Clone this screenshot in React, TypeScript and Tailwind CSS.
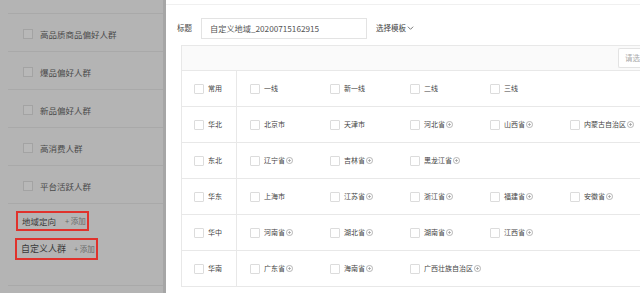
import React from 'react';

const font = { fontFamily: '"Noto Sans CJK SC", "Liberation Sans", sans-serif' };

const crowds = ['高品质商品偏好人群', '爆品偏好人群', '新品偏好人群', '高消费人群', '平台活跃人群'];

type Item = { name: string; more?: boolean };

const regions: { label: string; items: Item[] }[] = [
  { label: '常用', items: [{ name: '一线' }, { name: '新一线' }, { name: '二线' }, { name: '三线' }] },
  {
    label: '华北',
    items: [
      { name: '北京市' },
      { name: '天津市' },
      { name: '河北省', more: true },
      { name: '山西省', more: true },
      { name: '内蒙古自治区', more: true },
    ],
  },
  { label: '东北', items: [{ name: '辽宁省', more: true }, { name: '吉林省', more: true }, { name: '黑龙江省', more: true }] },
  {
    label: '华东',
    items: [
      { name: '上海市' },
      { name: '江苏省', more: true },
      { name: '浙江省', more: true },
      { name: '福建省', more: true },
      { name: '安徽省', more: true },
    ],
  },
  {
    label: '华中',
    items: [{ name: '河南省', more: true }, { name: '湖北省', more: true }, { name: '湖南省', more: true }, { name: '江西省', more: true }],
  },
  { label: '华南', items: [{ name: '广东省', more: true }, { name: '海南省', more: true }, { name: '广西壮族自治区', more: true }] },
];

function Box() {
  return <span className="w-[10px] h-[10px] border border-[#dcdcdc] bg-white rounded-[1px] shrink-0" />;
}

function PlusCircle() {
  return (
    <svg width="7" height="7" viewBox="0 0 8 8" className="ml-[1px] shrink-0">
      <circle cx="4" cy="4" r="3.5" fill="none" stroke="#999" strokeWidth="0.8" />
      <path d="M4 2.2v3.6M2.2 4h3.6" stroke="#999" strokeWidth="0.8" />
    </svg>
  );
}

export default function App() {
  return (
    <div className="w-[640px] h-[293px] flex overflow-hidden bg-white" style={font}>
      {/* 左侧被遮罩的人群列表 */}
      <div className="w-[166px] shrink-0 bg-[#b4b4b4] border-r-[3px] border-[#a6a6a6] pl-2 pt-[13px]">
        {crowds.map((c) => (
          <div key={c} className="h-[38px] border-t border-[#a9a9a9] flex items-center pl-[15px] pt-[3px] gap-[7px]">
            <span className="w-[10px] h-[10px] border border-[#a3a3a3] bg-[#b8b8b8]" />
            <span className="text-[8.5px] text-[#4a4a4a] whitespace-nowrap">{c}</span>
          </div>
        ))}
        <div className="border-t border-[#a9a9a9] pt-[7px] pl-[8px]">
          <div className="w-[73px] h-[20px] border-2 border-[#e0322c] flex items-center pl-[4px] whitespace-nowrap">
            <span className="text-[8.5px] text-[#3a3a3a]">地域定向</span>
            <span className="text-[7.5px] text-[#6a6a6a] ml-[9px]">+ 添加</span>
          </div>
        </div>
        <div className="pt-[7px] pl-[7px] pb-[25px] border-b border-[#a9a9a9]">
          <div className="w-[83px] h-[22px] border-2 border-[#e0322c] flex items-center pl-[4px] whitespace-nowrap">
            <span className="text-[9px] text-[#3a3a3a]">自定义人群</span>
            <span className="text-[7.5px] text-[#6a6a6a] ml-[8px]">+ 添加</span>
          </div>
        </div>
      </div>

      {/* 右侧抽屉 */}
      <div className="flex-1 min-w-0 flex flex-col">
        <div className="h-[5px] border-b border-[#f0f0f0]" />
        <div className="flex items-center h-[34px] pl-[11px] mt-[6px]">
          <span className="text-[7.5px] text-[#444]">标题</span>
          <div className="ml-[9px] w-[166px] h-[21px] border border-[#e3e3e3] flex items-center pl-[8px]">
            <span className="text-[8.2px] text-[#555] whitespace-nowrap">自定义地域_20200715162915</span>
          </div>
          <span className="ml-[9px] text-[7.5px] text-[#444] flex items-center">
            选择模板
            <svg width="7" height="6" viewBox="0 0 8 6" className="ml-[1px]">
              <path d="M1 1.5l3 3 3-3" fill="none" stroke="#555" strokeWidth="0.9" />
            </svg>
          </span>
        </div>

        <div className="ml-[15px] border-l border-t border-[#e8e8e8]">
          <div className="h-[25px] bg-[#fafafa] border-b border-[#e8e8e8] flex items-center justify-end">
            <div className="w-[22px] h-[20px] bg-white border-l border-y border-[#e3e3e3] rounded-l-[2px] overflow-hidden flex items-center pl-[6px]">
              <span className="text-[7.5px] text-[#aaa] whitespace-nowrap">请选</span>
            </div>
          </div>
          {regions.map((r) => (
            <div key={r.label} className="h-[36px] flex border-b border-[#e8e8e8]">
              <div className="w-[55px] shrink-0 border-r border-[#e8e8e8] flex items-center pl-[12px] gap-[4px]">
                <Box />
                <span className="text-[7px] text-[#444]">{r.label}</span>
              </div>
              <div className="flex items-center pl-[13px]">
                {r.items.map((it) => (
                  <div key={it.name} className="w-[80px] shrink-0 flex items-center gap-[4px]">
                    <Box />
                    <span className="text-[7px] text-[#444] whitespace-nowrap flex items-center">
                      {it.name}
                      {it.more && <PlusCircle />}
                    </span>
                  </div>
                ))}
              </div>
            </div>
          ))}
        </div>
      </div>
    </div>
  );
}
